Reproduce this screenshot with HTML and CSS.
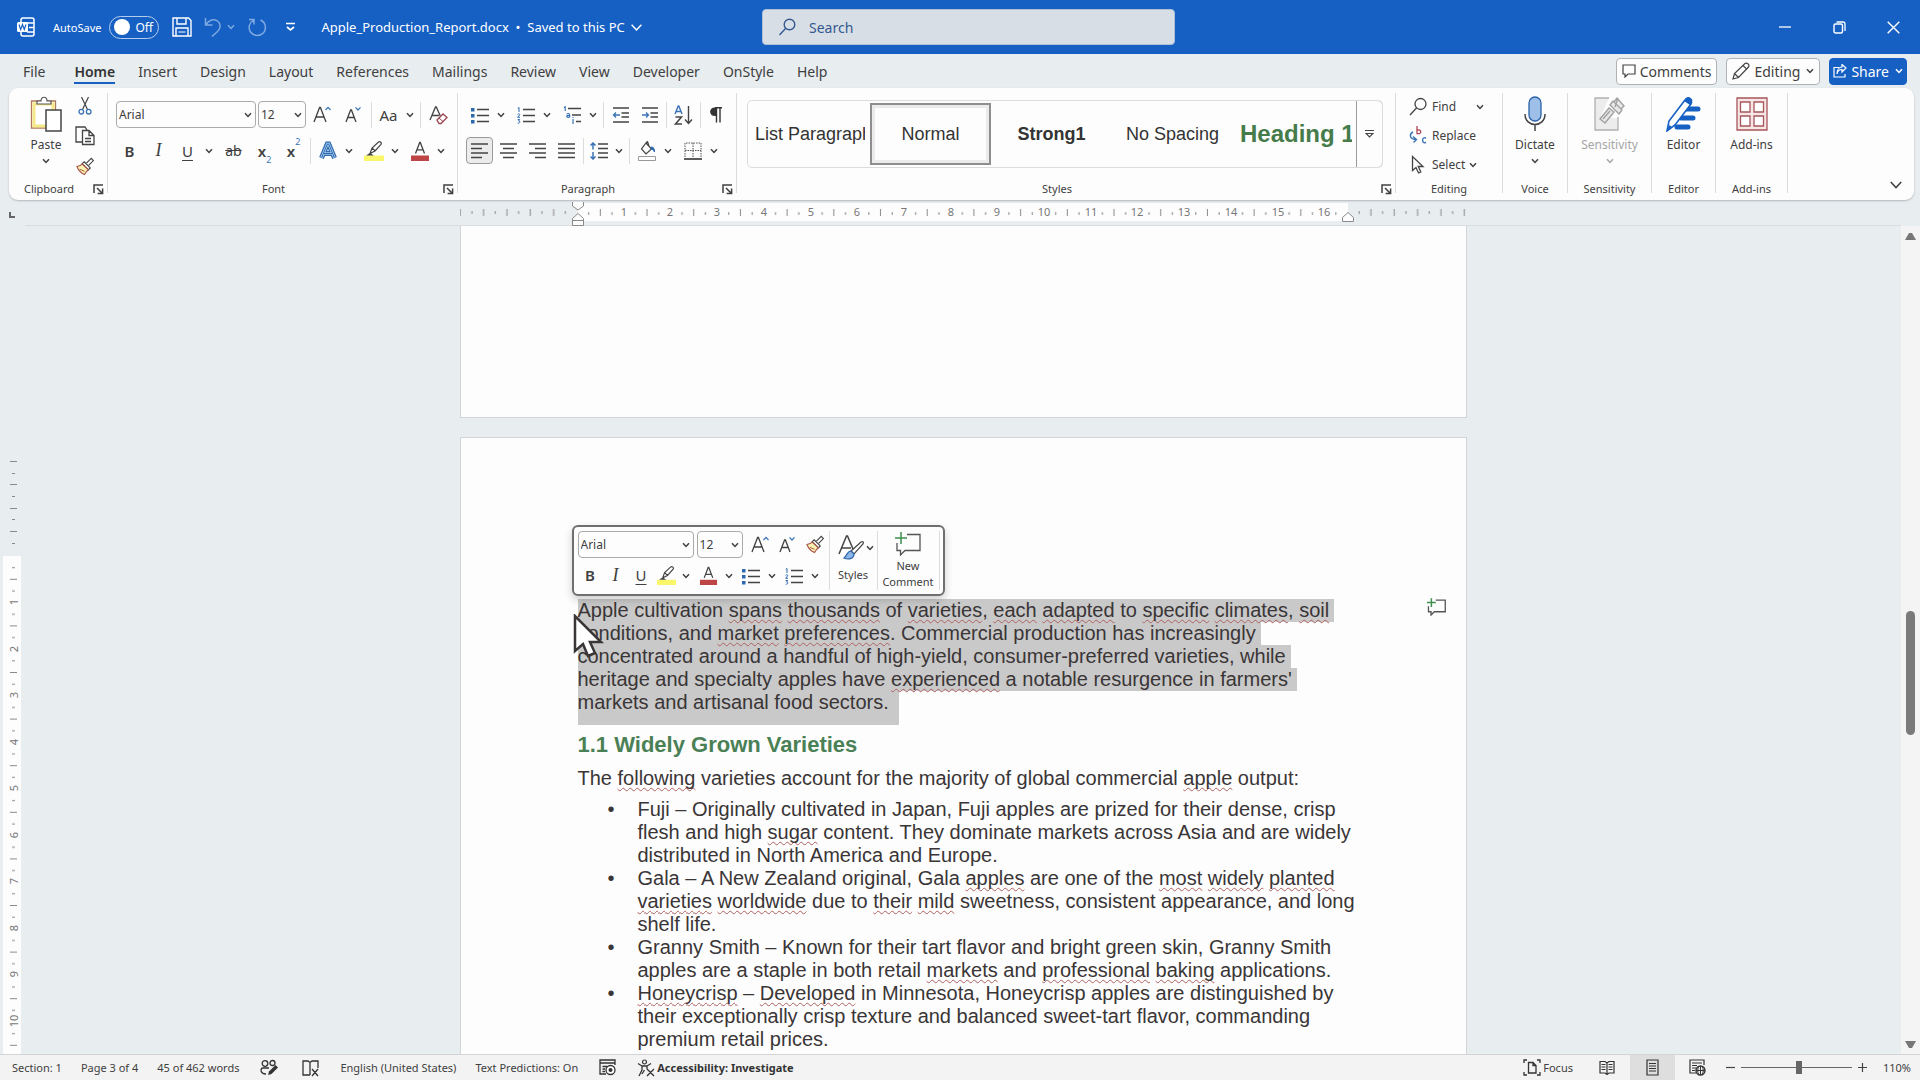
FILE: index.html
```html
<!DOCTYPE html>
<html lang="en">
<head>
<meta charset="utf-8">
<title>Apple_Production_Report.docx</title>
<link rel="stylesheet" href="styles.css">
</head>
<body>
<svg class="sprite" aria-hidden="true">
  <symbol id="chev" viewBox="0 0 8 8"><path d="M1 2.300 4 5.500 7 2.300" fill="none" stroke="currentColor" stroke-width="1.500" vector-effect="non-scaling-stroke"/></symbol>
  <symbol id="launch" viewBox="0 0 11 11"><path d="M1 9V1h9M4 4l5 5M9.600 4.500v5H4.600" fill="none" stroke="currentColor" stroke-width="1.500"/></symbol>
  <symbol id="grow" viewBox="0 0 20 20"><path d="M2 17 7.600 2.500h.8L14 17M4 12h8" fill="none" stroke="currentColor" stroke-width="1.300"/><path d="m13.500 5 2.500-2.600L18.500 5" fill="none" stroke="#3b74b5" stroke-width="1.300"/></symbol>
  <symbol id="shrink" viewBox="0 0 20 20"><path d="M3 17 7.600 5h.8L13 17M4.700 12.500h6.600" fill="none" stroke="currentColor" stroke-width="1.300"/><path d="M12.500 2.400 15 5l2.500-2.600" fill="none" stroke="#3b74b5" stroke-width="1.300"/></symbol>
  <symbol id="painter" viewBox="0 0 20 20"><path d="m11 6.500 5-5 2.300 2.300-5 5" fill="#fff" stroke="#444" stroke-width="1.200"/><path d="m8.500 5 6.500 6.500-2 2L6.500 7z" fill="#fff" stroke="#444" stroke-width="1.200"/><path d="M6.500 7.500c-1.500 1.500-3.500 2-5.500 2.500 1.500 4 4.500 7 8 8.500 1-2 2-3.500 4-5z" fill="#fbf3b0" stroke="#a8554c" stroke-width="1.200"/><path d="m4 13 5 2" stroke="#a8554c"/></symbol>
  <symbol id="marker" viewBox="0 0 20 20"><path fill="#fbf76a" d="M0 14.500h20V20H0z"/><path d="M6 12.500 8 7l6.500-6c1.500-1 3.500.8 2.500 2.300l-6 6.700zM8 7l3.300 3M6 12.500 4 14h4z" fill="none" stroke="#444" stroke-width="1.200"/></symbol>
  <symbol id="fcolor" viewBox="0 0 20 20"><path fill="#bd4545" d="M1 14.500h18V20H1z"/><path d="M5.500 12.500 9.700 1.500h.6l4.200 11M7 8.800h6" fill="none" stroke="#444" stroke-width="1.300"/></symbol>
  <symbol id="bullets" viewBox="0 0 18 18"><path d="M6 3.500h12M6 9.500h12M6 15.500h12" stroke="#444" stroke-width="1.300"/><path fill="#2c69b0" d="M0 2h3.500v3.500H0zM0 8h3.500v3.500H0zM0 14h3.500v3.500H0z"/></symbol>
  <symbol id="numbers" viewBox="0 0 18 18"><path d="M6 3.500h12M6 9.500h12M6 15.500h12" stroke="#444" stroke-width="1.300"/><path d="M.8 2.300 2 1.500V6M.6 8.300c.8-1 2.500-.6 2 .6L.7 11.300H3M.7 13.500h2L1.600 15c2 0 1.500 2.500-.9 2.200" fill="none" stroke="#2c69b0"/></symbol>
  <symbol id="multi" viewBox="0 0 18 18"><path d="M5 2.500h13M9 9h9M13 15.500h5" stroke="#444" stroke-width="1.300"/><path d="M1 1.500 2.200.8V5M10 13v5M10 11v1M3.700 8c2-1 3-.3 3 1v2.500M6.700 9.500c-2-.2-3 .2-3 1s2 1.300 3 .3" fill="none" stroke="#2c69b0" stroke-width="1.100"/></symbol>
  <symbol id="outdent" viewBox="0 0 18 18"><path d="M1 2h16M9.500 7H17M9.500 11H17M1 16h16" stroke="#444" stroke-width="1.300"/><path d="M8 9H1.500M4 6.500 1.500 9 4 11.500" fill="none" stroke="#3b74b5" stroke-width="1.300"/></symbol>
  <symbol id="indent" viewBox="0 0 18 18"><path d="M1 2h16M9.500 7H17M9.500 11H17M1 16h16" stroke="#444" stroke-width="1.300"/><path d="M1 9h6.500M5 6.500 7.500 9 5 11.500" fill="none" stroke="#3b74b5" stroke-width="1.300"/></symbol>
  <symbol id="newcomment" viewBox="0 0 26 24"><path d="M12 2.500h13v16H10L5.500 23v-4.500H2V11" fill="none" stroke="#555" stroke-width="1.300" vector-effect="non-scaling-stroke"/><path d="M6 0v12M0 6h12" stroke="#3f8f4e" stroke-width="1.500" vector-effect="non-scaling-stroke"/></symbol>
</svg>

<header class="titlebar">
  <div class="quick">
    <svg class="word" width="18" height="20" viewBox="0 0 18 20"><path d="M4 5V3q0-2 2-2h9q2 0 2 2v14q0 2-2 2H6q-2 0-2-2v-2M10 6h7M12 10.500h5M10 15h7" fill="none" stroke="#fff" stroke-width="1.500"/><rect y="5" width="11" height="10" rx="1.500" fill="#fff"/><path d="m2 7.500 1.700 5 1.800-5 1.800 5 1.700-5" fill="none" stroke="#1660c4" stroke-width="1.200"/></svg>
    <label class="autosave"><span>AutoSave</span><input type="checkbox" role="switch" aria-label="AutoSave"><span class="switch">Off</span></label>
    <button class="bare" aria-label="Save"><svg width="20" height="20" viewBox="0 0 20 20"><path d="M1 1h15.500L19 3.500V19H1zM5 1v6h9V1M4 19v-8h12v8" fill="none" stroke="#fff" stroke-width="1.400"/><path d="M6.500 15h7" stroke="#fff"/></svg></button>
    <button class="bare faded undo" aria-label="Undo"><svg width="18" height="20" viewBox="0 0 18 20"><path d="M1.500 1v7h7M1.500 8C5 2.500 10 1.500 13.500 4c4 3 3 7.500 0 10.500L8 19.500" fill="none" stroke="currentColor" stroke-width="1.500"/></svg><svg width="8" height="8"><use href="#chev"/></svg></button>
    <button class="bare faded" aria-label="Redo"><svg width="20" height="20" viewBox="0 0 20 20"><path d="M13.500 3C20 6 19.500 14 15 17c-4 2.500-9 1.500-11.500-2C1 11 2 6 6.500 3M2 2.500h5v5" fill="none" stroke="currentColor" stroke-width="1.500"/></svg></button>
    <button class="bare custom" aria-label="Customize toolbar"><svg width="9" height="10" viewBox="0 0 9 10"><path d="M0 1.500h9M1 5l3.500 3L8 5" fill="none" stroke="#fff" stroke-width="1.700"/></svg></button>
    <button class="bare doc-name"><span>Apple_Production_Report.docx&nbsp; •&nbsp; Saved to this PC</span><svg width="13" height="13"><use href="#chev"/></svg></button>
  </div>
  <label class="search"><svg width="17" height="18" viewBox="0 0 17 18"><circle cx="10.500" cy="6.500" r="5.300" fill="none" stroke="#33598f" stroke-width="1.400"/><path d="m6.500 10.500-6 6.500" stroke="#33598f" stroke-width="1.400"/></svg><input type="search" placeholder="Search" aria-label="Search"></label>
  <div class="window-buttons">
    <button class="bare" aria-label="Minimize"><svg width="12" height="12" viewBox="0 0 12 12"><path d="M0 6h12" stroke="#fff" stroke-width="1.300"/></svg></button>
    <button class="bare" aria-label="Restore"><svg width="13" height="13" viewBox="0 0 13 13"><rect x="1" y="3" width="8.500" height="9" rx="1.500" fill="none" stroke="#fff" stroke-width="1.400"/><path d="M3.500 1H10q2 0 2 2v7" fill="none" stroke="#fff" stroke-width="1.300"/></svg></button>
    <button class="bare" aria-label="Close"><svg width="13" height="13" viewBox="0 0 13 13"><path d="m.7.700 11.600 11.600M12.300.7.700 12.300" stroke="#fff" stroke-width="1.400"/></svg></button>
  </div>
</header>

<div class="tabrow">
  <nav class="tabs">
    <a href="#file" class="file">File</a><a href="#home" class="active">Home</a><a href="#insert">Insert</a><a href="#design">Design</a><a href="#layout">Layout</a><a href="#references">References</a><a href="#mailings">Mailings</a><a href="#review">Review</a><a href="#view">View</a><a href="#developer">Developer</a><a href="#onstyle">OnStyle</a><a href="#help">Help</a>
  </nav>
  <div class="actions">
    <button class="action"><svg width="14" height="14" viewBox="0 0 14 14"><path d="M1 1h12v9H6l-3 3v-3H1z" fill="none" stroke="#444" stroke-width="1.200"/></svg>Comments</button>
    <button class="action"><svg width="18" height="18" viewBox="0 0 18 18"><path d="M1 17 2.500 11.500 13 1.500c2-1.500 5 1.300 3.500 3.500L6.500 15.500zM2.500 11.500l4 4M11 3.500l3.700 3.700" fill="none" stroke="#444" stroke-width="1.200"/></svg>Editing<svg class="end" width="8" height="8"><use href="#chev"/></svg></button>
    <button class="action share"><svg width="14" height="14" viewBox="0 0 14 14"><path d="M6 3.500H1V13h11v-3M4 10c.5-3 2-4.500 5-4.500V8l4-4-4-3.500V3C6 3 4 6 4 10z" fill="none" stroke="#fff" stroke-width="1.200"/></svg>Share<svg class="end" width="8" height="8"><use href="#chev"/></svg></button>
  </div>
</div>

<section class="ribbon" aria-label="Home">
  <div class="group clipboard">
    <div class="body">
      <button class="big"><svg width="32" height="36" viewBox="0 0 32 36"><path d="M1.500 5h24v27h-24z" fill="#fff" stroke="#b07a5a" stroke-width="1.300"/><path d="M4 8h19v22H4z" fill="#fff" stroke="#f5e98a" stroke-width="3"/><path d="M7 8V5h4c0-5 6-5 6 0h4v3z" fill="#fff" stroke="#555" stroke-width="1.200"/><path d="M16 14h15v21H16z" fill="#fff" stroke="#444" stroke-width="1.500"/></svg><span>Paste</span><svg width="8" height="8"><use href="#chev"/></svg></button>
      <div class="stack">
        <button class="bare" aria-label="Cut"><svg width="14" height="18" viewBox="0 0 14 18"><path d="m3.500 0 6 12.500M10.500 0l-6 12.500" stroke="#444" stroke-width="1.200"/><circle cx="3.300" cy="14.700" r="2.300" fill="none" stroke="#3b74b5" stroke-width="1.300"/><circle cx="10.700" cy="14.700" r="2.300" fill="none" stroke="#3b74b5" stroke-width="1.300"/></svg></button>
        <button class="bare" aria-label="Copy"><svg width="20" height="20" viewBox="0 0 20 20"><path d="M7 16H1V1h9l2 3" fill="none" stroke="#444" stroke-width="1.300"/><path d="M7.500 4.500H14l5 5v9H7.500zM14 4.500v5h5M10 12.500h6M10 15.500h6" fill="none" stroke="#444" stroke-width="1.300"/></svg></button>
        <button class="bare" aria-label="Format painter"><svg width="19" height="19"><use href="#painter"/></svg></button>
      </div>
    </div>
    <div class="caption">Clipboard</div><button class="launcher" aria-label="Clipboard options"><svg width="11" height="11"><use href="#launch"/></svg></button>
  </div>

  <div class="group font">
    <div class="rows">
      <div class="row">
        <span class="combo wide"><select aria-label="Font"><option>Arial</option></select><svg width="8" height="8"><use href="#chev"/></svg></span>
        <span class="combo"><select aria-label="Font size"><option>12</option></select><svg width="8" height="8"><use href="#chev"/></svg></span>
        <button class="tool" aria-label="Grow font"><svg width="20" height="20"><use href="#grow"/></svg></button>
        <button class="tool roomy" aria-label="Shrink font"><svg width="20" height="20"><use href="#shrink"/></svg></button>
        <i class="sep"></i>
        <span class="split"><button class="tool case">Aa</button><button class="drop" aria-label="Case options"><svg width="8" height="8"><use href="#chev"/></svg></button></span>
        <i class="sep"></i>
        <button class="tool" aria-label="Clear formatting"><svg width="20" height="20" viewBox="0 0 20 20"><path d="M2 15 7.500 2h.8l4 9M4 10.500h7" fill="none" stroke="#444" stroke-width="1.300"/><path d="m9 15 6-6 4 3.500-6 6h-2z" fill="#fff" stroke="#9c4650" stroke-width="1.300"/><path d="m11 13 4 3.500" stroke="#9c4650"/></svg></button>
      </div>
      <div class="row">
        <button class="tool b">B</button>
        <button class="tool i">I</button>
        <span class="split"><button class="tool u">U</button><button class="drop" aria-label="Underline options"><svg width="8" height="8"><use href="#chev"/></svg></button></span>
        <button class="tool roomy strike">ab</button>
        <button class="tool b">x<sub>2</sub></button>
        <button class="tool b">x<sup>2</sup></button>
        <i class="sep"></i>
        <span class="split"><button class="tool" aria-label="Text effects"><svg width="20" height="20" viewBox="0 0 20 20"><path d="M3.500 17 9.300 3h1.400l5.800 14M6 12.500h8" fill="none" stroke="#2c69b0" stroke-width="5"/><path d="M3.500 17 9.300 3h1.400l5.800 14M6 12.500h8" fill="none" stroke="#a8cdf0" stroke-width="2.600"/><path d="M3.500 17 9.300 3h1.400l5.800 14M6 12.500h8" fill="none" stroke="#2c69b0" stroke-width="1"/></svg></button><button class="drop" aria-label="Effect options"><svg width="8" height="8"><use href="#chev"/></svg></button></span>
        <span class="split"><button class="tool" aria-label="Highlight"><svg width="20" height="20"><use href="#marker"/></svg></button><button class="drop" aria-label="Highlight colours"><svg width="8" height="8"><use href="#chev"/></svg></button></span>
        <span class="split"><button class="tool" aria-label="Font colour"><svg width="20" height="20"><use href="#fcolor"/></svg></button><button class="drop" aria-label="Font colours"><svg width="8" height="8"><use href="#chev"/></svg></button></span>
      </div>
    </div>
    <div class="caption">Font</div><button class="launcher" aria-label="Font options"><svg width="11" height="11"><use href="#launch"/></svg></button>
  </div>

  <div class="group paragraph">
    <div class="rows">
      <div class="row">
        <span class="split"><button class="tool" aria-label="Bullets"><svg width="18" height="18"><use href="#bullets"/></svg></button><button class="drop" aria-label="Bullet styles"><svg width="8" height="8"><use href="#chev"/></svg></button></span>
        <span class="split"><button class="tool" aria-label="Numbering"><svg width="18" height="18"><use href="#numbers"/></svg></button><button class="drop" aria-label="Number styles"><svg width="8" height="8"><use href="#chev"/></svg></button></span>
        <span class="split"><button class="tool" aria-label="Multilevel list"><svg width="18" height="18"><use href="#multi"/></svg></button><button class="drop" aria-label="List styles"><svg width="8" height="8"><use href="#chev"/></svg></button></span>
        <i class="sep"></i>
        <button class="tool" aria-label="Decrease indent"><svg width="18" height="18"><use href="#outdent"/></svg></button>
        <button class="tool" aria-label="Increase indent"><svg width="18" height="18"><use href="#indent"/></svg></button>
        <i class="sep"></i>
        <button class="tool" aria-label="Sort"><svg width="19" height="20" viewBox="0 0 19 20"><path d="M1 9 4.200 1h.6L8 9M2 6.500h5" fill="none" stroke="#3b74b5" stroke-width="1.400"/><path d="M1.500 12h6l-6 7H8" fill="none" stroke="#444" stroke-width="1.500"/><path d="M14.500 1v17M11 14.500l3.500 4 3.500-4" fill="none" stroke="#444" stroke-width="1.400"/></svg></button>
        <i class="sep"></i>
        <button class="tool narrow" aria-label="Show marks"><svg width="14" height="18" viewBox="0 0 14 18"><path d="M8 10H6C-.5 10-.5 1.500 6 1.500h2z" fill="#333"/><path d="M6 1.800h7M7.500 2v14.500M11 2v14.500" stroke="#333" stroke-width="1.400"/></svg></button>
      </div>
      <div class="row">
        <button class="tool on" aria-label="Align left"><svg width="17" height="16" viewBox="0 0 17 16"><path d="M0 1h17M0 5.500h11M0 10h17M0 14.500h11" stroke="#444" stroke-width="1.300"/></svg></button>
        <button class="tool" aria-label="Center"><svg width="17" height="16" viewBox="0 0 17 16"><path d="M0 1h17M3 5.500h11M0 10h17M3 14.500h11" stroke="#444" stroke-width="1.300"/></svg></button>
        <button class="tool" aria-label="Align right"><svg width="17" height="16" viewBox="0 0 17 16"><path d="M0 1h17M6 5.500h11M0 10h17M6 14.500h11" stroke="#444" stroke-width="1.300"/></svg></button>
        <button class="tool" aria-label="Justify"><svg width="17" height="16" viewBox="0 0 17 16"><path d="M0 1h17M0 5.500h17M0 10h17M0 14.500h17" stroke="#444" stroke-width="1.300"/></svg></button>
        <i class="sep"></i>
        <span class="split"><button class="tool narrow" aria-label="Line spacing"><svg width="18" height="18" viewBox="0 0 18 18"><path d="M8 2h10M8 6.500h10M8 11h10M8 15.500h10" stroke="#444" stroke-width="1.300"/><path d="M3 1v6.500M.5 3.500 3 1l2.500 2.500M3 10v7M.5 14.500 3 17l2.500-2.500" fill="none" stroke="#3b74b5" stroke-width="1.500"/></svg></button><button class="drop" aria-label="Spacing options"><svg width="8" height="8"><use href="#chev"/></svg></button></span>
        <i class="sep"></i>
        <span class="split"><button class="tool" aria-label="Shading"><svg width="20" height="20" viewBox="0 0 20 20"><path d="M1.500 15.500h17v4h-17z" fill="#fff" stroke="#999"/><path d="m9 2 5.500 6L9 13 4.500 8zM9 2 10.500.5 12 5" fill="none" stroke="#444" stroke-width="1.200"/><path d="M14 6c3 0 3.500 2 3.500 5-1-2-2-3-3.500-3z" fill="#2c69b0" stroke="#2c69b0"/></svg></button><button class="drop" aria-label="Shading colours"><svg width="8" height="8"><use href="#chev"/></svg></button></span>
        <span class="split"><button class="tool" aria-label="Borders"><svg width="18" height="18" viewBox="0 0 18 18"><path d="M1 15V1h16v14M9 1v15M1 8.500h16" fill="none" stroke="#555" stroke-dasharray="1.500 1"/><path d="M0 17h18" stroke="#333" stroke-width="1.600"/></svg></button><button class="drop" aria-label="Border styles"><svg width="8" height="8"><use href="#chev"/></svg></button></span>
      </div>
    </div>
    <div class="caption">Paragraph</div><button class="launcher" aria-label="Paragraph options"><svg width="11" height="11"><use href="#launch"/></svg></button>
  </div>

  <div class="group styles">
    <div class="gallery">
      <button class="style list">List Paragraph</button><button class="style chosen">Normal</button><button class="style strong">Strong1</button><button class="style">No Spacing</button><button class="style h1">Heading 1</button>
      <button class="more" aria-label="More styles"><svg width="9" height="10" viewBox="0 0 9 10"><path d="M0 1.500h9M1 4.500h7L4.500 8z" fill="none" stroke="#444" stroke-width="1.200"/></svg></button>
    </div>
    <div class="caption">Styles</div><button class="launcher" aria-label="Styles pane"><svg width="11" height="11"><use href="#launch"/></svg></button>
  </div>

  <div class="group editing">
    <div class="commands">
      <button class="command"><svg width="19" height="19" viewBox="0 0 19 19"><circle cx="11.500" cy="7" r="5.500" fill="none" stroke="#444" stroke-width="1.300"/><path d="M7.500 11 1 18" stroke="#444" stroke-width="1.300"/></svg><span>Find</span><svg class="far" width="8" height="8"><use href="#chev"/></svg></button>
      <button class="command"><svg width="19" height="19" viewBox="0 0 19 19"><path d="M8 0v8M8 4.500c4.500-2.500 5.500 4.500 0 3" fill="none" stroke="#b04a5a" stroke-width="1.300"/><path d="M17 12c-4-2-5 6 0 4.500M4 6c-4 2-3.500 7 2.500 7.500M4 10.500l3.500 3-3 3" fill="none" stroke="#3b74b5" stroke-width="1.400"/></svg><span>Replace</span></button>
      <button class="command"><svg width="19" height="19" viewBox="0 0 19 19"><path d="M3.500 1.500v14l3.500-3 2.500 5.500 2.300-1-2.500-5.500H14z" fill="none" stroke="#444" stroke-width="1.300"/></svg><span>Select</span><svg width="8" height="8"><use href="#chev"/></svg></button>
    </div>
    <div class="caption">Editing</div>
  </div>

  <div class="group voice">
    <button class="big"><svg width="22" height="36" viewBox="0 0 22 36"><rect x="5" y="1" width="12" height="24" rx="6" fill="#9dbfe8" stroke="#2c62a8" stroke-width="1.300"/><path d="M1 18c0 14 20 14 20 0M11 28.500V35" fill="none" stroke="#444" stroke-width="1.500"/></svg><span>Dictate</span><svg width="8" height="8"><use href="#chev"/></svg></button>
    <div class="caption">Voice</div>
  </div>
  <div class="group sensitivity">
    <button class="big" disabled><svg width="31" height="36" viewBox="0 0 31 36"><path d="M1 2h14L7 20l17 3v11H1z" fill="#ececec"/><path d="M15 2H1v32h23V21" fill="none" stroke="#b0b0b0" stroke-width="1.300"/><path d="m6 23 9-11 5 4-9 11zM9 23l7-8M16 9l3-4 9 9-3 4zM20 6l3-4 7 8-3 3M24 2l-3 9" fill="#e8e8e8" stroke="#a0a0a0" stroke-width="1.400"/></svg><span>Sensitivity</span><svg width="8" height="8"><use href="#chev"/></svg></button>
    <div class="caption">Sensitivity</div>
  </div>
  <div class="group editor">
    <button class="big"><svg width="35" height="36" viewBox="0 0 35 36"><path d="M20 13h12M15 22h12M11 31h11" stroke="#1660c4" stroke-width="5" stroke-linecap="round"/><path d="M1 35 3 25 19 4c2-3 8 0 6 4L9 29z" fill="#fff" stroke="#1660c4" stroke-width="1.600"/><path d="m18 5 2-3c2-3 8 1 6 4l-2 3zM1 35l2-6 3 2z" fill="#1660c4"/></svg><span>Editor</span></button>
    <div class="caption">Editor</div>
  </div>
  <div class="group addins">
    <button class="big"><svg width="32" height="36" viewBox="0 0 32 36"><g fill="none" stroke="#a5565a" stroke-width="1.300"><path d="M1 2h30v32H1z" fill="#f8e6e6"/><path fill="#fff" d="M4.500 6H14v10H4.500zM18 6h9.500v10H18zM4.500 20H14v10H4.500zM18 20h9.500v10H18z"/></g></svg><span>Add-ins</span></button>
    <div class="caption">Add-ins</div>
  </div>
  <button class="collapse" aria-label="Collapse ribbon"><svg width="14" height="14"><use href="#chev"/></svg></button>
</section>

<main class="workspace">
  <div class="corner"><svg width="6" height="6" viewBox="0 0 6 6"><path d="M1 0v5h5" fill="none" stroke="#666" stroke-width="2"/></svg></div>
  <div class="hruler">
    <svg width="1008" height="24" viewBox="0 0 1008 24">
      <defs>
        <pattern id="cm" x="117" width="46.700" height="24" patternUnits="userSpaceOnUse"><path d="M11.700 10v3M23.300 7v7M35 10v3" stroke="#8a8a8a"/></pattern>
        <pattern id="half" x="111" width="23.350" height="24" patternUnits="userSpaceOnUse"><path d="M6 7v7M17.700 9v3" stroke="#8a8a8a"/></pattern>
      </defs>
      <path fill="#fdfdfd" d="M118 1h770v18H118z"/>
      <path fill="url(#half)" d="M0 0h113v24H0zM894 0h114v24H894z"/>
      <path fill="url(#cm)" d="M124 0h760v24H124z"/>
      <g class="ticks"><text x="164" y="14">1</text><text x="210" y="14">2</text><text x="257" y="14">3</text><text x="304" y="14">4</text><text x="351" y="14">5</text><text x="397" y="14">6</text><text x="444" y="14">7</text><text x="491" y="14">8</text><text x="537" y="14">9</text><text x="584" y="14">10</text><text x="631" y="14">11</text><text x="677" y="14">12</text><text x="724" y="14">13</text><text x="771" y="14">14</text><text x="818" y="14">15</text><text x="864" y="14">16</text></g>
      <path d="M112.500 0v4l5.500 4 5.500-4V0M112.500 23.500v-7l5.500-5 5.500 5v7zM112.500 18.500h11M882.500 19.500v-4l5.500-5 5.500 5v4z" fill="#fdfdfd" stroke="#8a8a8a"/>
    </svg>
  </div>
  <div class="corner"></div>

  <div class="vruler">
    <svg width="22" height="830" viewBox="0 0 22 830">
      <defs>
        <pattern id="vcm" y="330" width="22" height="46.600" patternUnits="userSpaceOnUse"><path d="M12 11.700h3M10 23.300h7M12 35h3" stroke="#8a8a8a"/></pattern>
      </defs>
      <path fill="#fdfdfd" d="M3 330h18v500H3z"/>
      <path d="M10 235.500h7M10 258.500h7M10 282.500h7M10 305.500h7M12 247.500h3M12 270.500h3M12 293.500h3M12 317.500h3" stroke="#8a8a8a"/>
      <path fill="url(#vcm)" d="M3 332h18v498H3z"/>
      <g class="ticks"><text transform="translate(18 376) rotate(-90)">1</text><text transform="translate(18 423) rotate(-90)">2</text><text transform="translate(18 469) rotate(-90)">3</text><text transform="translate(18 516) rotate(-90)">4</text><text transform="translate(18 562) rotate(-90)">5</text><text transform="translate(18 609) rotate(-90)">6</text><text transform="translate(18 655) rotate(-90)">7</text><text transform="translate(18 702) rotate(-90)">8</text><text transform="translate(18 748) rotate(-90)">9</text><text transform="translate(18 795) rotate(-90)">10</text></g>
    </svg>
  </div>

  <div class="canvas">
    <div class="page previous"></div>
    <article class="page current">
      <p class="selected"><span>Apple cultivation <u>spans</u> <u>thousands</u> of <u>varieties</u>, <u>each</u> <u>adapted</u> to <u>specific</u> <u>climates</u>, <u>soil</u></span><span>conditions, and <u>market</u> <u>preferences</u>. Commercial production has increasingly</span><span>concentrated around a handful of high-yield, consumer-preferred varieties, while</span><span>heritage and specialty apples have <u>experienced</u> a notable resurgence in farmers'</span><span class="last">markets and artisanal food sectors.</span></p>
      <h2>1.1 Widely Grown Varieties</h2>
      <p class="lead">The <u>following</u> varieties account for the majority of global commercial <u>apple</u> output:</p>
      <ul>
        <li>Fuji – Originally cultivated in Japan, Fuji apples are prized for their dense, crisp<br>flesh and high <u>sugar</u> content. They dominate markets across Asia and are widely<br>distributed in North America and Europe.</li>
        <li>Gala – A New Zealand original, Gala <u>apples</u> are one of the <u>most</u> <u>widely</u> <u>planted</u><br><u>varieties</u> <u>worldwide</u> due to <u>their</u> <u>mild</u> sweetness, consistent appearance, and long<br>shelf life.</li>
        <li>Granny Smith – Known for their tart flavor and bright green skin, Granny Smith<br>apples are a staple in both retail <u>markets</u> and <u>professional</u> <u>baking</u> applications.</li>
        <li><u>Honeycrisp</u> – <u>Developed</u> in Minnesota, Honeycrisp apples are distinguished by<br>their exceptionally crisp texture and balanced sweet-tart flavor, commanding<br>premium retail prices.</li>
      </ul>
      <button class="bare margin-comment" aria-label="Add comment"><svg width="19" height="18"><use href="#newcomment"/></svg></button>

      <div class="mini" role="toolbar" aria-label="Formatting">
        <div class="mini-rows">
          <div class="row">
            <span class="combo mid"><select aria-label="Font"><option>Arial</option></select><svg width="8" height="8"><use href="#chev"/></svg></span>
            <span class="combo"><select aria-label="Font size"><option>12</option></select><svg width="8" height="8"><use href="#chev"/></svg></span>
            <button class="tool" aria-label="Grow font"><svg width="20" height="20"><use href="#grow"/></svg></button>
            <button class="tool narrow" aria-label="Shrink font"><svg width="20" height="20"><use href="#shrink"/></svg></button>
            <button class="tool" aria-label="Format painter"><svg width="19" height="19"><use href="#painter"/></svg></button>
          </div>
          <div class="row tight">
            <button class="tool b">B</button><button class="tool i narrow">I</button><button class="tool u">U</button>
            <span class="split"><button class="tool narrow" aria-label="Highlight"><svg width="19" height="19"><use href="#marker"/></svg></button><button class="drop" aria-label="Highlight colours"><svg width="8" height="8"><use href="#chev"/></svg></button></span>
            <span class="split"><button class="tool" aria-label="Font colour"><svg width="19" height="19"><use href="#fcolor"/></svg></button><button class="drop" aria-label="Font colours"><svg width="8" height="8"><use href="#chev"/></svg></button></span>
            <span class="split"><button class="tool" aria-label="Bullets"><svg width="18" height="18"><use href="#bullets"/></svg></button><button class="drop" aria-label="Bullet styles"><svg width="8" height="8"><use href="#chev"/></svg></button></span>
            <span class="split"><button class="tool" aria-label="Numbering"><svg width="18" height="18"><use href="#numbers"/></svg></button><button class="drop" aria-label="Number styles"><svg width="8" height="8"><use href="#chev"/></svg></button></span>
          </div>
        </div>
        <button class="mini-big pick"><span class="pair"><svg width="26" height="26" viewBox="0 0 26 26"><path d="M1 19 8.500 1h1L15 14M4 13h9" fill="none" stroke="#444" stroke-width="1.500"/><path d="M13 16 23 7c2-1 3 0 2 2l-9 10z" fill="#fff" stroke="#444" stroke-width="1.200"/><path d="M13 16c-4 0-4 5-7 7 4 2 10 1 10-4z" fill="#8ab6e8" stroke="#2c62a8" stroke-width="1.200"/></svg><svg width="8" height="8"><use href="#chev"/></svg></span><span>Styles</span></button>
        <button class="mini-big comment"><svg width="26" height="24"><use href="#newcomment"/></svg><span>New<br>Comment</span></button>
      </div>
      <svg class="pointer" width="32" height="44" viewBox="0 0 32 44"><path d="M2 2v35l8-7 5 12 7-3-5-11h11z" fill="#fff" stroke="#3a3536" stroke-width="2.500"/></svg>
    </article>
  </div>

  <div class="scrollbar">
    <svg width="11" height="8" viewBox="0 0 11 8"><path d="M0 8 4 1h3l4 7z" fill="#777"/></svg>
    <div class="thumb"></div>
    <svg width="11" height="8" viewBox="0 0 11 8"><path d="M0 0h11L7 7H4z" fill="#777"/></svg>
  </div>
</main>

<footer class="status">
  <span>Section: 1</span><span>Page 3 of 4</span><span>45 of 462 words</span>
  <button class="bare mark" aria-label="Track changes"><svg width="19" height="18" viewBox="0 0 19 18"><g fill="none" stroke="#333" stroke-width="1.300"><circle cx="5" cy="4.500" r="2.800"/><circle cx="12.500" cy="4" r="2.500"/><path d="M9 9H3c-3 0-3 6 3 6"/></g><path d="m8 16 1-3.500L15.500 6 18 8.500 11.500 15z" fill="#333"/></svg></button>
  <button class="bare mark" aria-label="Proofing"><svg width="17" height="18" viewBox="0 0 17 18"><path d="M8 16H1V2h5l2 1.500L10 2h6v7M8 3.500V16M10 10l6 7M16 10l-6 7" fill="none" stroke="#333" stroke-width="1.300"/></svg></button>
  <span>English (United States)</span><span>Text Predictions: On</span>
  <button class="bare mark" aria-label="Record macro"><svg width="17" height="17" viewBox="0 0 17 17"><path d="M7 15H1V1h15v5M1 4h15M3.500 7.500H8M3.500 10H6M3.500 12.500H6" fill="none" stroke="#333" stroke-width="1.300"/><circle cx="11.500" cy="11" r="4.500" fill="#fff" stroke="#333" stroke-width="1.300"/><circle cx="11.500" cy="11" r="2" fill="#333"/></svg></button>
  <button class="bare access"><svg width="18" height="18" viewBox="0 0 18 18"><circle cx="7.500" cy="3" r="2" fill="none" stroke="#333" stroke-width="1.200"/><path d="M1 4.500 5 7v4l-3 6M14 4.500 10 7v3M5 7h5M5 15l2.500-4M10 10l7 7M17 10l-7 7" fill="none" stroke="#333" stroke-width="1.300"/></svg><b>Accessibility: Investigate</b></button>
  <div class="views">
    <button class="bare focus"><svg width="18" height="17" viewBox="0 0 18 17"><path d="M1 4V1h3M14 1h3v3M1 13v3h3M17 13v3h-3M5.500 3.500H10l3 3v7.500H5.500zM10 3.500v3h3" fill="none" stroke="#333" stroke-width="1.300"/></svg>Focus</button>
    <button class="view" aria-label="Read mode"><svg width="16" height="16" viewBox="0 0 16 16"><path d="M8 3 6 1.500H1V13h5l2 1.500 2-1.500h5V1.500h-5zM8 3v11M2.500 4.500h4M2.500 7h4M2.500 9.500h4M9.500 4.500h4M9.500 7h4M9.500 9.500h4" fill="none" stroke="#333" stroke-width="1.200"/></svg></button>
    <button class="view active" aria-label="Print layout"><svg width="13" height="17" viewBox="0 0 13 17"><path d="M1 1h11v15H1zM3 4.500h7M3 7h7M3 9.500h7M3 12h7" fill="none" stroke="#333" stroke-width="1.200"/></svg></button>
    <button class="view" aria-label="Web layout"><svg width="17" height="17" viewBox="0 0 17 17"><path d="M7 14H1V1h14v5M3 4h10M3 6.500h5M3 9h4M3 11.500h3" fill="none" stroke="#333" stroke-width="1.200"/><circle cx="11.500" cy="11.500" r="4.500" fill="#eee" stroke="#333" stroke-width="1.400"/><path d="M7 11.500h9M11.500 7v9M9.500 8c-1 2-1 5 0 7M13.500 8c1 2 1 5 0 7" fill="none" stroke="#333"/></svg></button>
    <div class="zoom">
      <button class="bare" aria-label="Zoom out"><svg width="9" height="9" viewBox="0 0 9 9"><path d="M0 4.500h9" stroke="#444" stroke-width="1.200"/></svg></button>
      <input type="range" min="0" max="100" value="52" aria-label="Zoom">
      <button class="bare" aria-label="Zoom in"><svg width="9" height="9" viewBox="0 0 9 9"><path d="M0 4.500h9M4.500 0v9" stroke="#444" stroke-width="1.200"/></svg></button>
    </div>
    <span>110%</span>
  </div>
</footer>
</body>
</html>
```
FILE: styles.css
```css
* { box-sizing: border-box; }

body {
  margin: 0;
  height: 100vh;
  display: flex;
  flex-direction: column;
  overflow: hidden;
  background: #e8edf0;
  color: #404040;
  font-family: "Noto Sans", "Open Sans", sans-serif;
  font-size: 12px;
}

button, input, select { font: inherit; color: inherit; }
svg { display: block; flex: none; }
.sprite { position: absolute; width: 0; height: 0; }

.bare {
  display: flex;
  align-items: center;
  padding: 0;
  border: 0;
  background: none;
}

/* Title bar */
.titlebar {
  flex: none;
  display: grid;
  grid-template-columns: 1fr 413px 1fr;
  align-items: center;
  height: 54px;
  padding-left: 17px;
  background: #1660c4;
  color: #fff;
}
.quick { display: flex; align-items: center; white-space: nowrap; }
.autosave { display: flex; align-items: center; gap: 8px; margin: 0 13px 0 18px; font-size: 11px; }
.autosave input { position: absolute; opacity: 0; }
.switch {
  display: flex;
  align-items: center;
  gap: 5px;
  width: 50px;
  height: 23px;
  padding-left: 4px;
  border: 1px solid #b4cdee;
  border-radius: 12px;
  font-size: 12px;
}
.switch::before { content: ""; width: 16px; height: 16px; border-radius: 8px; background: #fff; }
.faded { color: #7fa9e0; }
.undo { gap: 5px; margin: 0 12px; }
.custom { margin: 0 26px 0 19px; }
.doc-name { gap: 5px; font-size: 13px; }

.search {
  display: flex;
  align-items: center;
  gap: 13px;
  height: 36px;
  padding: 0 16px;
  border: 1px solid #aebfd8;
  border-radius: 4px;
  background: #d8dee6;
}
.search input {
  flex: 1;
  min-width: 0;
  padding: 0;
  border: 0;
  outline: 0;
  background: none;
  font-size: 14px;
}
.search input::placeholder { color: #33598f; opacity: 1; }
.window-buttons { display: flex; justify-content: flex-end; }
.window-buttons .bare { width: 54px; height: 54px; justify-content: center; }

/* Tabs */
.tabrow {
  flex: none;
  display: flex;
  justify-content: space-between;
  align-items: center;
  height: 34px;
  padding: 0 13px 0 23px;
}
.tabs { display: flex; gap: 23px; font-size: 14px; line-height: 20px; }
.tabs a { padding: 4px 0 0; color: inherit; text-decoration: none; border-bottom: 2px solid transparent; }
.tabs .file { margin-right: 6px; }
.tabs .active { border-color: #1660c4; font-weight: 600; color: #333; }
.actions { display: flex; gap: 9px; }
.action {
  display: flex;
  align-items: center;
  gap: 4px;
  height: 27px;
  padding: 0 5px;
  border: 1px solid #b0b3b5;
  border-radius: 4px;
  background: #fdfdfd;
  font-size: 14px;
}
.action .end { margin-left: 2px; }
.action.share { padding: 0 3px; border-color: #1660c4; background: #1660c4; color: #fff; }

/* Ribbon */
.ribbon {
  flex: none;
  display: flex;
  position: relative;
  height: 112px;
  margin: 0 6px 0 9px;
  padding: 5px 0 7px;
  border-radius: 9px;
  background: #fdfdfd;
  box-shadow: 0 1px 2px #b4b8bb;
}
.group {
  flex: none;
  position: relative;
  display: flex;
  flex-direction: column;
  justify-content: space-between;
  border-right: 1px solid #dcdcdc;
}
.clipboard { width: 99px; }
.font { width: 350px; }
.paragraph { width: 279px; }
.styles { flex: 0 1 659px; min-width: 0; }
.editing { width: 107px; }
.voice { width: 65px; }
.sensitivity { width: 84px; }
.editor { width: 64px; }
.addins { width: 72px; }
.caption { height: 18px; margin-bottom: -5px; font-size: 11px; line-height: 18px; text-align: center; padding: 0 4px; }
.clipboard .caption, .font .caption, .paragraph .caption, .styles .caption { padding-right: 22px; }
.voice .caption, .sensitivity .caption, .editor .caption, .addins .caption { padding: 0; }

.launcher {
  position: absolute;
  right: 3px;
  bottom: -2px;
  padding: 0;
  border: 0;
  background: none;
}
.body { display: flex; gap: 13px; padding-left: 21px; }
.big {
  display: flex;
  flex-direction: column;
  align-items: center;
  padding: 3px 0 0;
  border: 0;
  background: none;
  line-height: 17px;
}
.big span { margin: 4px 0; }
.big:disabled { color: #a6a6a6; }
.stack { display: flex; flex-direction: column; align-items: center; gap: 11px; padding-top: 4px; }

.rows { display: flex; flex-direction: column; gap: 9px; padding: 8px 0 0 8px; }
.row { display: flex; align-items: center; gap: 2px; height: 27px; }
.tool {
  display: flex;
  align-items: center;
  justify-content: center;
  width: 27px;
  height: 27px;
  padding: 0;
  border: 0;
  background: none;
}
.roomy { width: 31px; }
.narrow { width: 24px; }
.drop { display: flex; align-items: center; justify-content: center; width: 15px; height: 27px; padding: 0; border: 0; background: none; }
.split { display: flex; }
.split + .split { margin-left: 2px; }
.sep { flex: none; width: 1px; height: 26px; margin: 0 1px; background: #dcdcdc; }
.on { border: 1px solid #9a9a9a; border-radius: 4px; background: #ececec; }
.case { font-size: 15px; }
.b { font-size: 15px; font-weight: 600; }
.i { font-family: "Liberation Serif", serif; font-size: 18px; font-style: italic; }
.u { font-size: 15px; text-decoration: underline; text-underline-offset: 3px; }
.strike { font-size: 14px; text-decoration: line-through; }
.b sub, .b sup { font-size: 9px; line-height: 9px; font-weight: 400; color: #3b74b5; }
.b sub { align-self: flex-end; }
.b sup { align-self: flex-start; }

.combo {
  display: grid;
  align-items: center;
  width: 48px;
  height: 27px;
  border: 1px solid #ababab;
  border-radius: 4px;
  background: #fdfdfd;
}
.combo.wide { width: 140px; }
.combo.mid { width: 119px; }
.combo select {
  grid-area: 1 / 1;
  width: 100%;
  height: 25px;
  padding: 0 2px;
  border: 0;
  background: none;
  appearance: none;
}
.combo svg { grid-area: 1 / 1; justify-self: end; margin-right: 3px; pointer-events: none; }

.gallery {
  display: flex;
  height: 68px;
  margin: 7px 12px 0 10px;
  padding-left: 1px;
  border: 1px solid #dcdcdc;
  border-radius: 5px;
  overflow: hidden;
}
.style {
  flex: 0 0 121px;
  padding: 0;
  border: 0;
  background: none;
  font-family: "Liberation Sans", Arial, sans-serif;
  font-size: 18px;
  color: #333;
  white-space: nowrap;
}
.style.list { flex: none; width: 110px; margin: 0 5px 0 6px; overflow: hidden; text-align: left; }
.style.chosen { height: 62px; margin-top: 2px; border: 2px solid #8e8e8e; box-shadow: inset 0 0 0 3px #ebebeb; }
.style.strong { font-weight: 700; }
.style.h1 { flex: 1 1 0; min-width: 0; padding-left: 7px; overflow: hidden; text-align: left; font-size: 24px; font-weight: 700; color: #457c4a; }
.more {
  flex: none;
  display: flex;
  align-items: center;
  justify-content: center;
  width: 27px;
  margin: -1px -1px -1px 4px;
  border: 1px solid #9a9a9a;
  border-radius: 0 5px 5px 0;
  background: none;
}

.commands { display: flex; flex-direction: column; gap: 10px; padding: 4px 10px 0 13px; }
.command { display: flex; align-items: center; gap: 4px; padding: 0; height: 19px; border: 0; background: none; line-height: 19px; }
.far { margin-left: auto; margin-right: 8px; }
.collapse { position: absolute; right: 11px; bottom: 8px; padding: 0; border: 0; background: none; }

/* Workspace */
.workspace {
  flex: 1;
  min-height: 0;
  display: grid;
  grid-template-columns: 25px 1fr 19px;
  grid-template-rows: 24px 1fr;
  padding-top: 2px;
}
.corner { padding: 10px 0 0 9px; }
.hruler { display: flex; justify-content: center; padding-left: 2px; border-bottom: 1px solid #d9dddf; }
.ticks { font-size: 11px; fill: #777; text-anchor: middle; }
.vruler { overflow: hidden; min-height: 0; }
.canvas { min-height: 0; overflow: hidden; display: flex; flex-direction: column; align-items: center; gap: 19px; }
.page {
  flex: none;
  position: relative;
  width: 1007px;
  max-width: 100%;
  border: 1px solid #d2d5d7;
  background: #fdfdfd;
  color: #3a3536;
}
.previous { height: 192px; border-top: 0; }
.current {
  padding: 161px 117px 120px;
  font-family: "Liberation Sans", Arial, sans-serif;
  font-size: 20px;
  line-height: 23px;
  white-space: nowrap;
}
.current p { margin: 0; }
.current u {
  text-decoration: underline wavy #b06060 1px;
  text-underline-offset: 2px;
  text-decoration-skip-ink: none;
}
.selected span { display: block; width: fit-content; padding-right: 5px; background: #c9c9c9; }
.selected .last { padding: 0 10px 11px 0; }
.current h2 { margin: 7px 0 9px; font-size: 22px; line-height: 26px; color: #4a8055; }
.current ul { margin: 8px 0 0; padding-left: 60px; list-style: none; }
.current li { position: relative; }
.current li::before { content: "•"; position: absolute; left: -30px; }
.margin-comment { position: absolute; top: 160px; right: 20px; }
.pointer { position: absolute; left: 112px; top: 176px; }

.mini {
  position: absolute;
  left: 111px;
  top: 87px;
  display: flex;
  padding: 4px 3px;
  border: 2px solid #6f6f6f;
  border-radius: 6px;
  background: #fdfdfd;
  box-shadow: 0 4px 8px #00000030;
  font-family: "Noto Sans", "Open Sans", sans-serif;
  font-size: 12px;
  line-height: 17px;
  color: #404040;
}
.mini-rows { display: flex; flex-direction: column; gap: 4px; width: 252px; }
.mini .row { gap: 3px; padding-left: 1px; }
.mini .tight { gap: 0; padding: 0; }
.tight .split + .split { margin-left: 1px; }
.mini-big {
  display: flex;
  flex-direction: column;
  align-items: center;
  border: 0;
  border-left: 1px solid #dcdcdc;
  background: none;
  font-size: 11px;
  line-height: 16px;
}
.mini .pick { width: 48px; gap: 6px; padding: 4px 0 0; }
.mini .comment { width: 63px; gap: 2px; padding: 1px 0 0; border-right: 1px solid #dcdcdc; }
.pair { display: flex; align-items: center; gap: 2px; margin-left: 6px; }

.scrollbar {
  display: flex;
  flex-direction: column;
  align-items: center;
  justify-content: space-between;
  padding: 6px 0 5px;
  background: #f4f4f4;
}
.thumb { width: 9px; height: 124px; margin-top: 64px; border-radius: 5px; background: #7a7a7a; }

/* Status bar */
.status {
  flex: none;
  display: flex;
  align-items: center;
  gap: 19px;
  height: 26px;
  padding: 0 9px 0 12px;
  border-top: 1px solid #d4d4d4;
  background: #f3f3f3;
  font-size: 11px;
  white-space: nowrap;
}
.mark { padding: 0 2px; }
.access { gap: 2px; }
.access b { font-weight: 700; color: #333; }
.views { display: flex; align-items: center; height: 25px; margin-left: auto; }
.focus { gap: 2px; margin-right: 12px; }
.view { display: flex; align-items: center; justify-content: center; width: 45px; height: 25px; padding: 0; border: 0; background: none; }
.view.active { background: #dedede; }
.zoom { display: flex; align-items: center; gap: 6px; margin: 0 16px 0 6px; }
.zoom input { appearance: none; width: 111px; height: 13px; margin: 0; background: none; }
.zoom input::-webkit-slider-runnable-track { height: 13px; background: linear-gradient(#666, #666) center / 100% 1px no-repeat; }
.zoom input::-webkit-slider-thumb { appearance: none; width: 6px; height: 13px; background: #666; }
```
